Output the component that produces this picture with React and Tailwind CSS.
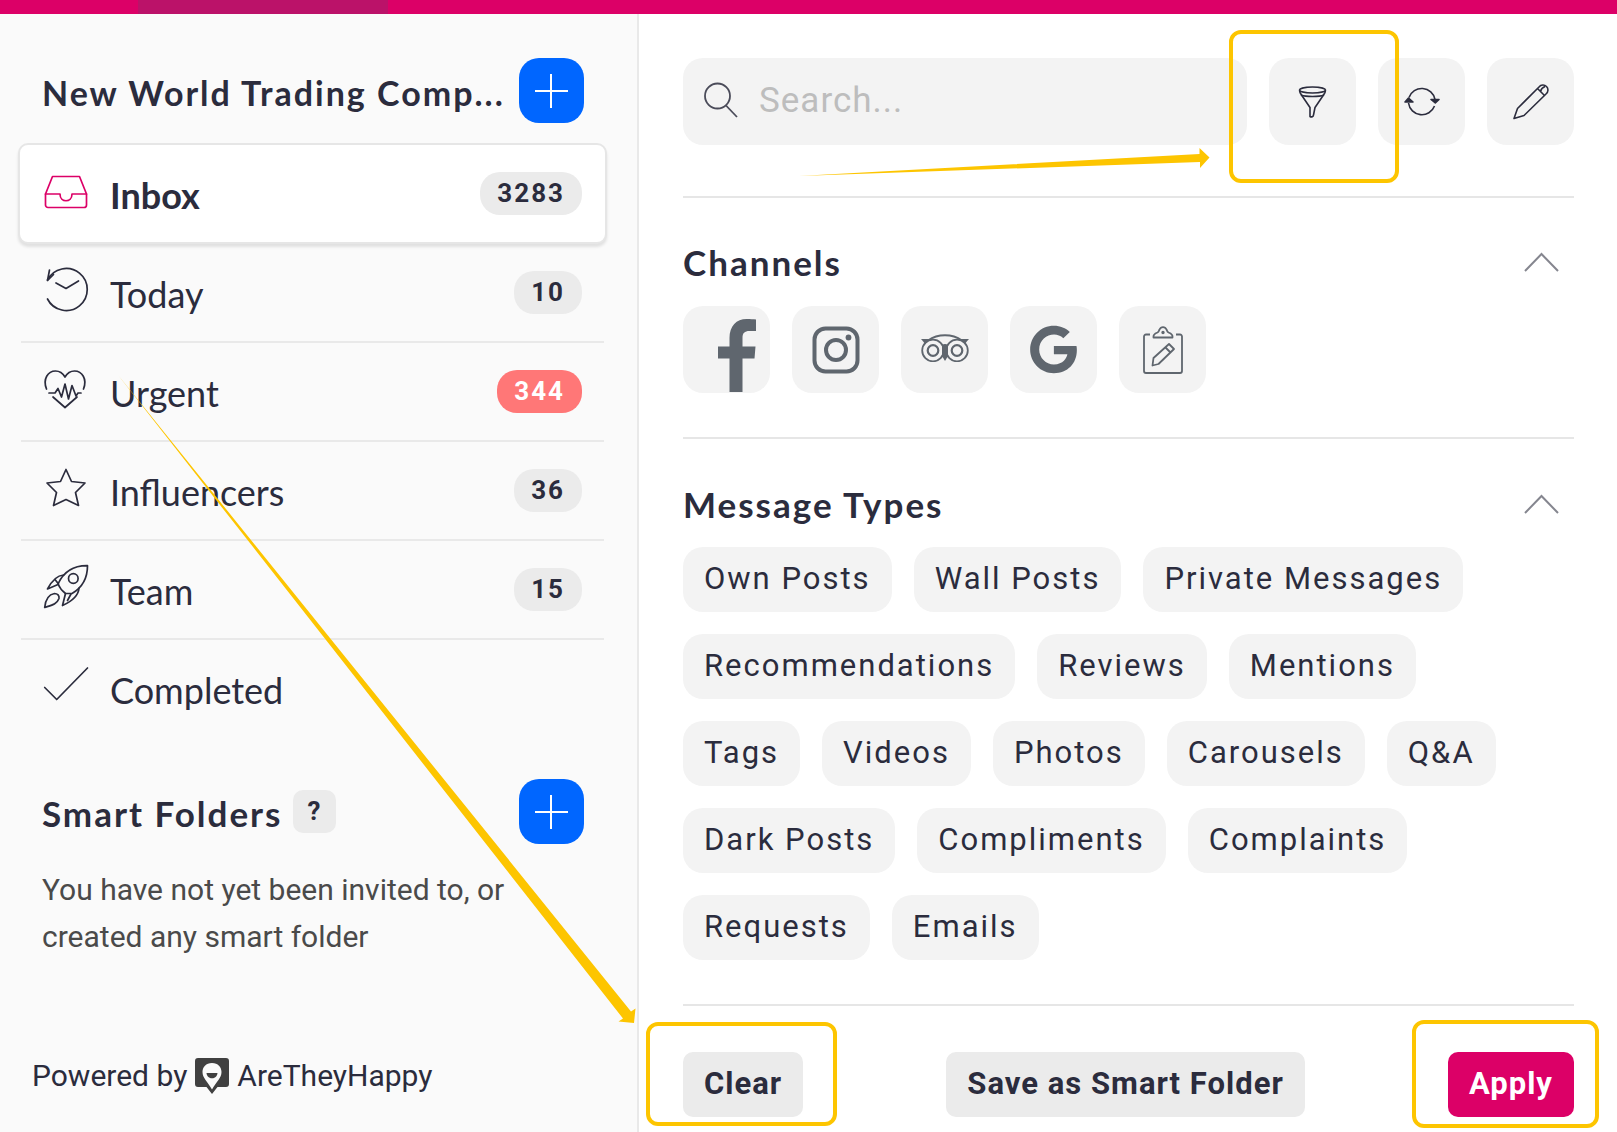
import React, { useState } from "react"
import { FaGoogle } from "react-icons/fa"

const headingFont = "font-['Lato','Open_Sans',sans-serif]"

const folders = [
  { id: "today", label: "Today", count: 10 },
  { id: "urgent", label: "Urgent", count: 344, alert: true },
  { id: "influencers", label: "Influencers", count: 36 },
  { id: "team", label: "Team", count: 15 },
  { id: "completed", label: "Completed" },
]

const messageTypes = [
  "Own Posts",
  "Wall Posts",
  "Private Messages",
  "Recommendations",
  "Reviews",
  "Mentions",
  "Tags",
  "Videos",
  "Photos",
  "Carousels",
  "Q&A",
  "Dark Posts",
  "Compliments",
  "Complaints",
  "Requests",
  "Emails",
]

const folderPaths = {
  inbox: (
    <>
      <path d="M8.5 7.5h27L42.5 25v11a2.5 2.5 0 0 1-2.5 2.5H4A2.5 2.5 0 0 1 1.5 36V25z" />
      <path d="M1.5 25H16c0 9 12 9 12 0h14.5" />
    </>
  ),
  today: (
    <>
      <path d="M3.5 12A21 21 0 1 1 3.5 31" />
      <path d="M3.5 12.5L5.5 2M3.5 12.5l6-6" />
      <path d="M12 15l10 5.5L34.5 13" />
    </>
  ),
  urgent: (
    <>
      <path d="M2.5 22C-1.5 12 4 4 11.5 4c4.5 0 7.500 2.500 9.500 6 2-3.500 5-6 9.500-6C38 4 43.5 12 39.5 22" />
      <path d="M5 26h6l3-4.500 3.500 8.500L21 17l3.500 15L28 18.500 32 29l2-3h3" />
      <path d="M9 30l12 10.500L33 30" />
    </>
  ),
  influencers: <path d="M22 3.5l5.500 12L41 17l-9.500 9.500 3 13L22 33.5 9.500 39.500l3-13L3 17l13.500-1.500z" />,
  team: (
    <>
      <path d="M43.5.7C30 .5 20 6 14 19c2 4.500 4 7 7.500 9.500h6.500C39 22 43.5 13 43.5.7z" />
      <circle cx="29.3" cy="13.5" r="4.8" />
      <path d="M19.5 10c-6 .5-11 4.500-16 14l10.500-4.500M11 14.5l3.500 4.500M35 23c-.5 8-6.500 13-16.500 17.500l3-12M27 29l-3.500 6.500" />
      <path d="M.7 42.500C1.500 34 5 29.500 10.500 28.500c3 0 5 2 4.500 5C13 39 8 40 .7 42.500z" />
    </>
  ),
  completed: <path d="M.7 23.500l12 12L43.500 4" />,
}

const FolderIcon = ({ name }) => (
  <svg
    viewBox="0 0 44 44"
    className="mb-1.5 h-11 w-11 shrink-0 overflow-visible"
    fill="none"
    stroke="currentColor"
    strokeWidth="1.7"
    strokeLinejoin="round"
    strokeLinecap="round"
    aria-hidden="true"
  >
    {folderPaths[name]}
  </svg>
)

const Badge = ({ count, alert }) => (
  <span
    className={`ml-auto flex h-[43px] items-center rounded-[20px] px-[17px] text-[26px] font-bold tracking-[2px] ${
      alert ? "bg-[#ff7777] text-white" : "bg-[#ebebeb] text-[#2b2c3d]"
    }`}
  >
    {count}
  </span>
)

const AddButton = ({ label }) => (
  <button
    type="button"
    aria-label={label}
    className="ml-auto flex h-[65px] w-[65px] shrink-0 items-center justify-center rounded-[20px] bg-[#0066ff] text-white"
  >
    <svg viewBox="0 0 34 34" className="h-[34px] w-[34px]" stroke="currentColor" strokeWidth="2" aria-hidden="true">
      <path d="M16 0v34M0 17h33" />
    </svg>
  </button>
)

const Sidebar = () => (
  <aside className="relative flex w-[639px] shrink-0 flex-col border-r-2 border-[#e9e9e9] bg-[#fafafa] pt-11 pb-[34px]">
    <div className="mb-5 flex items-center pr-[53px] pl-[42px]">
      <h2 className={`${headingFont} mt-1 text-[34px] font-bold tracking-[2px] whitespace-nowrap`}>
        New World Trading Comp...
      </h2>
      <AddButton label="Add company folder" />
    </div>

    <nav className="pr-[30px] pl-[18px]">
      <a
        href="#inbox"
        className="flex h-[101px] items-center rounded-[10px] border-2 border-[#e6e6e6] bg-white pr-[23px] pl-6 text-[#dc0067] shadow-[0_3px_3px_rgba(0,0,0,0.1)]"
      >
        <FolderIcon name="inbox" />
        <span className={`${headingFont} mt-0.5 ml-[22px] text-[36px] font-bold text-[#2b2c3d]`}>Inbox</span>
        <Badge count={3283} />
      </a>
      <ul className="mx-[3px]">
        {folders.map((folder) => (
          <li key={folder.id} className="border-b-2 border-[#e9e9e9] last:border-transparent">
            <a href={`#${folder.id}`} className="flex h-[97px] items-center pr-[22px] pl-[23px]">
              <FolderIcon name={folder.id} />
              <span className={`${headingFont} mt-0.5 ml-[22px] text-[36px]`}>{folder.label}</span>
              {folder.count && <Badge count={folder.count} alert={folder.alert} />}
            </a>
          </li>
        ))}
      </ul>
    </nav>

    <section className="mt-10 pr-[53px] pl-[42px]">
      <div className="flex items-center">
        <h2 className={`${headingFont} mt-1 text-[35px] font-bold tracking-[2px]`}>Smart Folders</h2>
        <button
          type="button"
          aria-label="About smart folders"
          className="ml-2.5 h-[43px] w-[43px] rounded-[10px] bg-[#ebebeb] text-[26px] font-bold"
        >
          ?
        </button>
        <AddButton label="Add smart folder" />
      </div>
      <p className="mt-[22px] max-w-[480px] text-[30px] leading-[47px] text-[#4a4a4a]">
        You have not yet been invited to, or created any smart folder
      </p>
    </section>

    <footer className="mt-auto flex items-center gap-2 pl-8 text-[30px]">
      Powered by
      <svg viewBox="0 0 34 36" className="h-9 w-[34px]" aria-hidden="true">
        <path fill="#404040" d="M3 0h28a3 3 0 0 1 3 3v23a3 3 0 0 1-3 3h-8.500L17 36l-5.500-7H3a3 3 0 0 1-3-3V3a3 3 0 0 1 3-3z" />
        <path fill="#fafafa" d="M17 5c6 0 9.500 4 9.500 9 0 6-5 9.500-9.500 17.500C12.500 23.500 7.500 20 7.500 14 7.500 9 11 5 17 5z" />
        <path fill="#404040" d="M11.500 15h11c-.5 7-10.500 7-11 0z" />
      </svg>
      <a href="#about">AreTheyHappy</a>
    </footer>

    {/* pointer from Urgent down to Clear */}
    <svg
      viewBox="0 0 520 650"
      className="pointer-events-none absolute top-[359px] left-[118px] z-10 h-[650px] w-[520px]"
      fill="#fdc500"
      aria-hidden="true"
    >
      <path d="M0 2L513 638.500l4.500-3L516 650l-15.500-1.500 4.500-3z" />
    </svg>
  </aside>
)

const Highlight = ({ className }) => (
  <span className={`pointer-events-none absolute z-10 rounded-xl border-4 border-[#fdc500] ${className}`} />
)

const ToolButton = ({ label, children }) => (
  <button
    type="button"
    aria-label={label}
    className="flex h-[87px] w-[87px] items-center justify-center rounded-[20px] bg-[#f3f3f3]"
  >
    <svg
      viewBox="0 0 36 36"
      className="h-9 w-9 overflow-visible"
      fill="none"
      stroke="currentColor"
      strokeWidth="1.6"
      strokeLinejoin="round"
      aria-hidden="true"
    >
      {children}
    </svg>
  </button>
)

const Toolbar = () => (
  <div className="flex gap-[22px]">
    <div className="relative flex h-[87px] min-w-0 flex-1 items-center rounded-[20px] bg-[#f3f3f3] pl-[21px]">
      <svg
        viewBox="0 0 34 36"
        className="mb-1 h-9 w-[34px] shrink-0"
        fill="none"
        stroke="#4a4b59"
        strokeWidth="1.8"
        aria-hidden="true"
      >
        <circle cx="13.5" cy="14" r="12.5" />
        <path d="M22 23.500L33 35" />
      </svg>
      <input
        type="text"
        aria-label="Search"
        placeholder="Search..."
        className="ml-[21px] min-w-0 flex-1 bg-transparent text-[35px] tracking-[1px] outline-none placeholder:text-[#bdbdbd]"
      />
      {/* pointer to the filter button */}
      <svg
        viewBox="0 0 414 30"
        className="pointer-events-none absolute top-[90px] right-[37px] h-[30px] w-[414px]"
        fill="#fdc500"
        aria-hidden="true"
      >
        <path d="M3 28L403.500 6V0L413.500 9.500 404 20v-6z" />
      </svg>
    </div>

    <div className="relative">
      <ToolButton label="Filter">
        <ellipse cx="17.5" cy="6" rx="13" ry="3" />
        <path d="M4.500 6.500c0 1.500 1 3 2 4.500L15 23.500V32.500c1.500 1 3.500 0 3.500-1.500L20 23.500 28.500 11c1-1.500 2-3 2-4.500" />
        <path d="M6 11c5 2 18 2 23 0" />
      </ToolButton>
      <Highlight className="-top-7 -right-[43px] -bottom-[38px] -left-10" />
    </div>
    <ToolButton label="Refresh">
      <path d="M5 13.500A13.500 13.500 0 0 1 31 15.500M30.500 22A13.500 13.500 0 0 1 4.500 19" />
      <path d="M27 15.500h8L31.300 19zM1 18h8L4.500 14z" fill="currentColor" />
    </ToolButton>
    <ToolButton label="Compose">
      <path d="M1 34.500L4.500 24.500 26 3c2-2.500 5.500-2.500 7.500-.5s2 5.500-.5 7.500L11 31.500zM24.500 4.500l7 7M27.500 7.500c.5-2.500 2-4 4.500-5" />
    </ToolButton>
  </div>
)

const Divider = ({ className }) => <hr className={`border-t-2 border-[#e6e6e6] ${className}`} />

const SectionHeader = ({ title, open, onToggle, className }) => (
  <div className={`flex h-11 items-center justify-between ${className}`}>
    <h3 className={`${headingFont} text-[35px] font-bold tracking-[2px]`}>{title}</h3>
    <button type="button" aria-label={`Toggle ${title}`} aria-expanded={open} onClick={onToggle} className="mr-3.5">
      <svg viewBox="0 0 36 20" className="h-5 w-9" fill="none" stroke="#85868f" strokeWidth="2" aria-hidden="true">
        <path d="M1 19L17.500 2 34 19" />
      </svg>
    </button>
  </div>
)

const ChannelButton = ({ label, children }) => (
  <button
    type="button"
    aria-label={label}
    className="flex h-[87px] w-[87px] items-center justify-center rounded-[20px] bg-[#f3f3f3] text-[#5f666e]"
  >
    {children}
  </button>
)

const Channels = () => (
  <div className="mt-[22px] flex flex-wrap gap-[22px]">
    <ChannelButton label="Facebook">
      <svg viewBox="0 0 87 87" className="h-[87px] w-[87px]" fill="currentColor" aria-hidden="true">
        <path d="M46.500 86V52.500H35v-12h11.500V32c0-12 7-19 17-19 4 0 7 .2 9.500.6V25h-6.500c-5 0-7 2-7 7v8.500h13L71.500 52.500h-12V86z" />
      </svg>
    </ChannelButton>
    <ChannelButton label="Instagram">
      <svg viewBox="0 0 48 48" className="h-12 w-12" fill="none" stroke="currentColor" strokeWidth="4" aria-hidden="true">
        <rect x="2.5" y="2.5" width="43" height="43" rx="11" />
        <circle cx="24" cy="24" r="10" />
        <circle cx="36.5" cy="11.5" r="2.9" fill="currentColor" stroke="none" />
      </svg>
    </ChannelButton>
    <ChannelButton label="Tripadvisor">
      <svg
        viewBox="0 0 48 28"
        className="mb-1 h-7 w-12"
        fill="none"
        stroke="currentColor"
        strokeWidth="1.8"
        aria-hidden="true"
      >
        <circle cx="12" cy="16.5" r="10.8" />
        <circle cx="36" cy="16.5" r="10.8" />
        <circle cx="12" cy="16.5" r="5.3" strokeWidth="2.2" />
        <circle cx="36" cy="16.5" r="5.3" strokeWidth="2.2" />
        <path d="M7 6.500C17-.5 31-.5 41 6.500" />
        <path
          d="M0 5h9L4 10.500C3 8 1.500 6.500 0 5zM48 5h-9l5 5.500c1-2.500 2.500-4 4-5.500zM21 11c2-1.500 4-1.500 6 0v11l-3 5-3-5z"
          fill="currentColor"
          stroke="none"
        />
      </svg>
    </ChannelButton>
    <ChannelButton label="Google">
      <FaGoogle className="h-[49px] w-[49px]" />
    </ChannelButton>
    <ChannelButton label="Surveys">
      <svg
        viewBox="0 0 40 48"
        className="h-12 w-10"
        fill="none"
        stroke="currentColor"
        strokeWidth="1.8"
        strokeLinejoin="round"
        aria-hidden="true"
      >
        <path d="M7 8.500H3a2 2 0 0 0-2 2V45a2 2 0 0 0 2 2h34a2 2 0 0 0 2-2V10.500a2 2 0 0 0-2-2h-4" />
        <path d="M10.500 11.500c-.5-3 1-4 4-5 1.500-.7 1.500-2 2-3 1.500-3.300 5.500-3.300 7 0 .5 1 .5 2.300 2 3 3 1 4.500 2 4 5z" />
        <circle cx="20" cy="6.5" r=".8" />
        <path d="M9.500 39.500l1-7.500L26 18l5 5L15.500 38zM22.500 21.500l5 5" />
      </svg>
    </ChannelButton>
  </div>
)

const FilterPanel = () => {
  const [open, setOpen] = useState({ channels: true, types: true })

  const toggle = (key) => setOpen({ ...open, [key]: !open[key] })

  return (
    <main className="min-w-0 flex-1 bg-white pt-11 pr-[43px] pb-[15px] pl-11">
      <Toolbar />
      <Divider className="mt-[51px]" />

      <SectionHeader title="Channels" open={open.channels} onToggle={() => toggle("channels")} className="mt-[42px]" />
      {open.channels && <Channels />}
      <Divider className="mt-11" />

      <SectionHeader title="Message Types" open={open.types} onToggle={() => toggle("types")} className="mt-[43px]" />
      {open.types && (
        <div className="mt-[21px] flex flex-wrap gap-[22px] pr-11">
          {messageTypes.map((type) => (
            <button
              key={type}
              type="button"
              className="h-[65px] rounded-[20px] bg-[#f3f3f3] px-[21px] text-[31px] tracking-[2px]"
            >
              {type}
            </button>
          ))}
        </div>
      )}
      <Divider className="mt-11" />

      <div className="mt-[46px] flex items-center justify-between text-[31px] font-bold tracking-[1px]">
        <div className="relative">
          <button type="button" className="h-[65px] rounded-[10px] bg-[#ebebeb] px-[21px]">
            Clear
          </button>
          <Highlight className="-top-[30px] -right-[34px] -bottom-[9px] -left-[37px]" />
        </div>
        <button type="button" className="h-[65px] rounded-[10px] bg-[#ebebeb] px-[21px]">
          Save as Smart Folder
        </button>
        <div className="relative">
          <button type="button" className="h-[65px] rounded-[10px] bg-[#dc0067] px-[21px] text-white">
            Apply
          </button>
          <Highlight className="-top-8 -right-[25px] -bottom-[11px] -left-9" />
        </div>
      </div>
    </main>
  )
}

const App = () => (
  <div className="flex min-h-screen flex-col overflow-hidden font-['Roboto',sans-serif] text-[#2b2c3d]">
    <header className="flex h-[14px] bg-[#dc0067]">
      <div className="ml-[138px] w-[250px] bg-[#bb1269]" />
    </header>
    <div className="flex flex-1">
      <Sidebar />
      <FilterPanel />
    </div>
  </div>
)

export default App
